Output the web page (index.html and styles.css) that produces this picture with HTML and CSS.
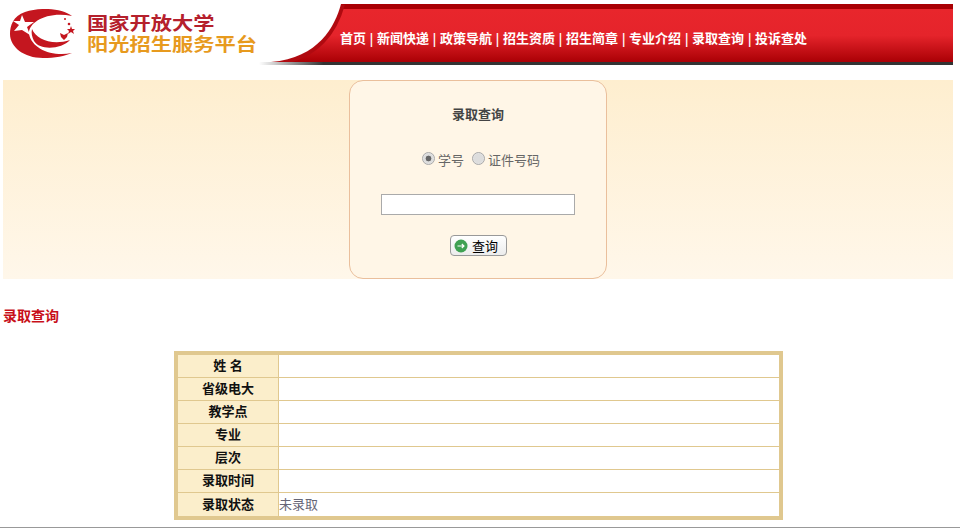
FILE: index.html
```html
<!DOCTYPE html>
<html lang="zh-CN">
<head>
  <meta charset="UTF-8" />
  <title>录取查询</title>
  <link rel="stylesheet" href="styles.css">
</head>
<body>

<div class="page">
  <div class="header">
    <div class="logo">
      <svg class="logo-mark" width="68" height="50" viewBox="0 0 68 50">
        <path fill="#c4161f" d="M62 7C52 -1 30 -2 15 3C3 7 0 17 0 25C0 38 14 49 33 49C45 49 55 47 62 44C42 48 22 40 19 25C18 14 36 2 62 7Z"/>
        <path fill="#c4161f" d="M22 20C26 30 42 37 60 31C52 40 30 42 24 32C22 28 21 24 22 20Z"/>
        <polygon fill="#fff" points="12,6 15,13 24,13 17,18 20,26 12,21 4,22 9,16 3,12 10,12"/>
        <polygon fill="#c4161f" points="61,17 62,20 65,20 63,22 64,25 61,23 58,25 59,22 57,20 60,20"/>
        <polygon fill="#c4161f" points="50,24 54,26 58,24 57,28 54,31 51,28"/>
        <circle fill="#c4161f" cx="55" cy="10" r="1"/>
        <circle fill="#c4161f" cx="59" cy="15" r="1.3"/>
      </svg>
      <div class="logo-text">
        <div class="logo-line1">国家开放大学</div>
        <div class="logo-line2">阳光招生服务平台</div>
      </div>
      <svg class="curve" width="86" height="61" viewBox="0 0 86 61">
        <defs>
          <linearGradient id="curveFill" x1="0" y1="0" x2="0" y2="1">
            <stop offset="0" stop-color="#e8262c"/>
            <stop offset="0.5" stop-color="#e5242b"/>
            <stop offset="1" stop-color="#aa0005"/>
          </linearGradient>
          <linearGradient id="curveLine" x1="0" y1="0" x2="1" y2="0">
            <stop offset="0" stop-color="#fff"/>
            <stop offset="0.75" stop-color="#333"/>
          </linearGradient>
        </defs>
        <rect x="0" y="5" width="86" height="53" fill="url(#curveFill)"/>
        <rect x="0" y="0" width="86" height="5" fill="#a90004"/>
        <path fill="none" stroke="#b00a10" stroke-width="8" d="M82 0C76 22 60 54 12 58"/>
        <path fill="#fff" d="M0 0H82C76 22 60 54 12 58H0Z"/>
        <rect x="0" y="58" width="86" height="3" fill="url(#curveLine)"/>
      </svg>
    </div>
    <div class="nav">
      <a>首页</a><span>|</span><a>新闻快递</a><span>|</span><a>政策导航</a><span>|</span><a>招生资质</a><span>|</span><a>招生简章</a><span>|</span><a>专业介绍</a><span>|</span><a>录取查询</a><span>|</span><a>投诉查处</a>
    </div>
  </div>

  <div class="search-band">
    <div class="search-card">
      <div class="search-title">录取查询</div>
      <div class="radio-row">
        <span class="radio checked"></span><label>学号</label>
        <span class="radio"></span><label>证件号码</label>
      </div>
      <input class="search-input" type="text">
      <button class="search-btn" type="button">
        <svg width="14" height="14" viewBox="0 0 14 14">
          <circle cx="7" cy="7" r="6.5" fill="#3fa152"/>
          <path d="M3.5 7H10M7.8 5L10 7L7.8 9" fill="none" stroke="#fff" stroke-width="1.1"/>
        </svg>
        <span>查询</span>
      </button>
    </div>
  </div>

  <h3 class="section-title">录取查询</h3>

  <table class="result-table">
    <tr><th>姓 名</th><td></td></tr>
    <tr><th>省级电大</th><td></td></tr>
    <tr><th>教学点</th><td></td></tr>
    <tr><th>专业</th><td></td></tr>
    <tr><th>层次</th><td></td></tr>
    <tr><th>录取时间</th><td></td></tr>
    <tr><th>录取状态</th><td>未录取</td></tr>
  </table>
</div>

<div class="footer-line"></div>

</body>
</html>
```

FILE: styles.css
```css
* {
  box-sizing: border-box;
}

html,
body {
  height: 100%;
}

body {
  margin: 0;
  background: #fff;
  overflow: hidden;
  font-family: "Liberation Sans", "Noto Sans CJK SC", sans-serif;
  font-size: 13px;
}

.page {
  width: 950px;
  margin-left: 3px;
  height: 527px;
}

.header {
  display: flex;
  padding-top: 4px;
  height: 65px;
}

.logo {
  position: relative;
  width: 337px;
  flex: none;
  display: flex;
  align-items: flex-start;
  padding: 5px 0 0 7px;
}

.logo-mark {
  flex: none;
}

.logo-text {
  margin: 5px 0 0 9px;
  font-weight: 700;
  font-size: 18px;
  line-height: 21px;
  white-space: nowrap;
  transform: scaleX(1.18);
  transform-origin: left top;
}

.logo-line1 {
  color: #b5202c;
}

.logo-line2 {
  color: #e79a1e;
}

.curve {
  position: absolute;
  left: 256px;
  top: 0;
  z-index: 1;
}

.nav {
  flex: 1;
  height: 61px;
  padding-top: 7px;
  border-top: 5px solid #a90004;
  border-bottom: 3px solid #333;
  background: linear-gradient(#e8262c 0%, #e5242b 50%, #aa0005 100%);
  background-clip: padding-box;
  color: #fff;
  font-weight: 700;
  font-size: 13px;
  line-height: 46px;
  white-space: nowrap;
  display: flex;
}

.nav a,
.nav span {
  position: relative;
  z-index: 2;
}

.nav span {
  width: 11px;
  text-align: center;
  font-weight: 400;
  font-size: 15px;
}

.search-band {
  margin-top: 15px;
  height: 199px;
  background: linear-gradient(#feeecf, #fff7ea);
  display: flex;
  justify-content: center;
}

.search-card {
  width: 258px;
  height: 199px;
  border: 1px solid #eabf9c;
  border-radius: 14px;
  background: #fff6e7;
  display: flex;
  flex-direction: column;
  align-items: center;
}

.search-title {
  margin-top: 24px;
  color: #444;
  font-weight: 700;
  font-size: 13px;
  line-height: 20px;
}

.radio-row {
  margin-top: 24px;
  padding-left: 6px;
  height: 20px;
  display: flex;
  align-items: center;
  color: #666;
  font-size: 13px;
}

.radio {
  width: 13px;
  height: 13px;
  border-radius: 50%;
  border: 1px solid #aaa;
  background: #ddd;
  margin: -2px 3px 0 8px;
  box-shadow: inset 0 0 1px #fff;
}

.radio.checked {
  background: radial-gradient(circle, #666 0 2.6px, #ddd 3.2px);
  margin-left: 0;
}

.search-input {
  margin-top: 25px;
  width: 194px;
  height: 21px;
  border: 1px solid #aaa;
  background: #fff;
  padding: 0;
}

.search-btn {
  margin-top: 20px;
  width: 57px;
  height: 21px;
  border: 1px solid #999;
  border-radius: 4px;
  background: linear-gradient(#fff, #ececec);
  display: flex;
  align-items: center;
  justify-content: center;
  gap: 4px;
  padding: 0 4px 0 0;
  font-family: inherit;
  font-size: 13px;
  color: #000;
}

.section-title {
  margin: 27px 0 25px;
  height: 20px;
  line-height: 20px;
  font-size: 14px;
  font-weight: 700;
  color: #c8101a;
}

.result-table {
  width: 609px;
  margin-left: 171px;
  border-collapse: separate;
  border-spacing: 0;
  border: 4px solid #e0c88f;
  table-layout: fixed;
}

.result-table th,
.result-table td {
  padding: 0;
  border-bottom: 1px solid #e0c88f;
  line-height: 20px;
  height: 23px;
}

.result-table tr:last-child th,
.result-table tr:last-child td {
  border-bottom: 0;
}

.result-table th {
  width: 101px;
  border-right: 1px solid #e0c88f;
  background: #fbeecb;
  color: #111;
  font-weight: 700;
  font-size: 13px;
}

.result-table td {
  background: #fff;
  color: #667;
  font-size: 13px;
}

.footer-line {
  height: 1px;
  background: #999;
}
```
